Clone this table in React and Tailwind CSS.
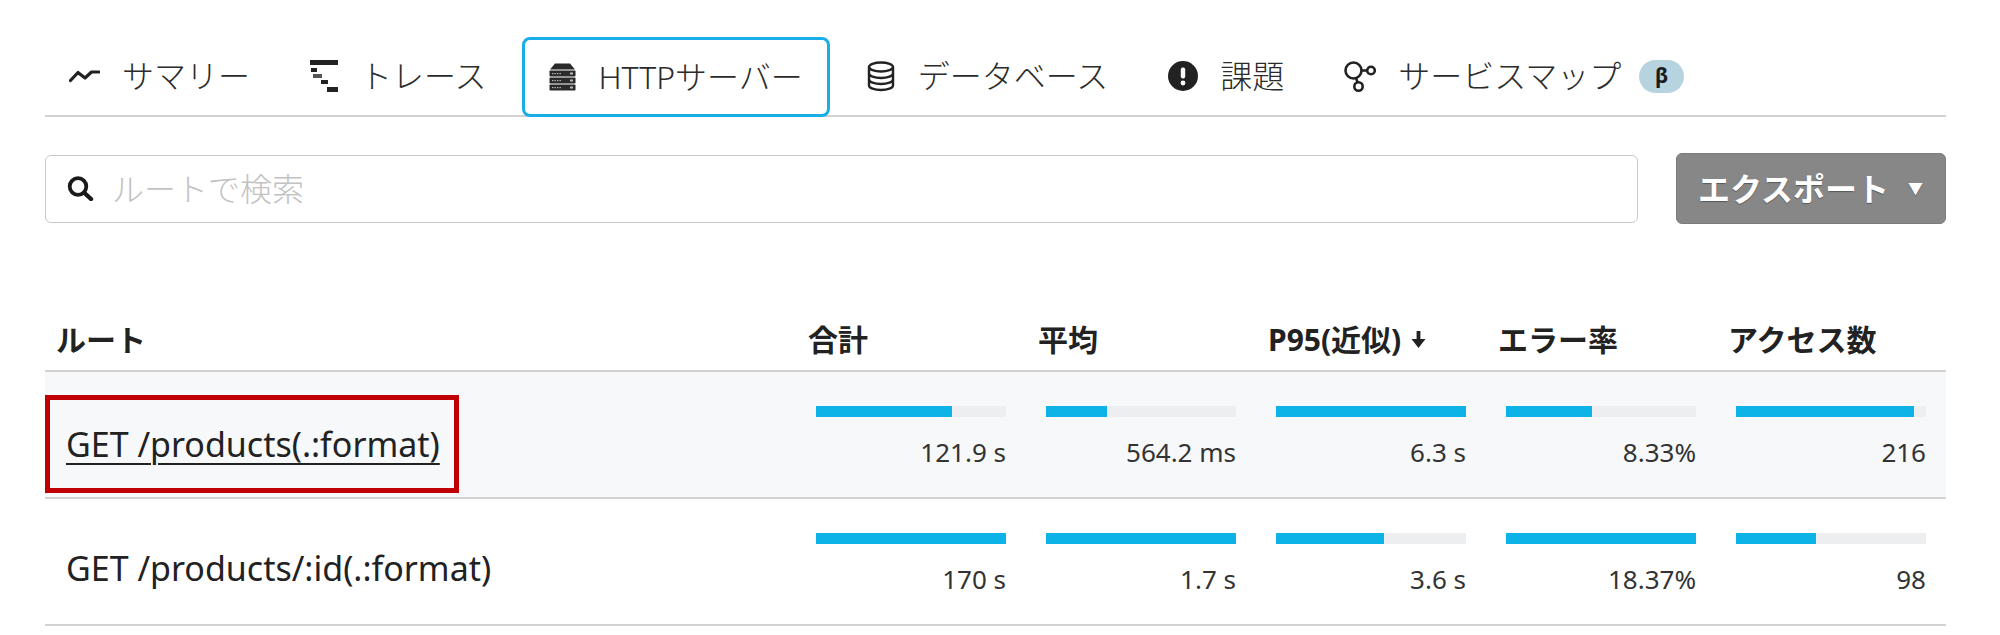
import React from 'react';

const TrendIcon = () => (
  <svg width="31" height="14" viewBox="0 0 31 14" fill="none">
    <path d="M1.5 11.5 L9 3.5 L16 9 L22.5 3 L30 3" stroke="#222" strokeWidth="3.2" strokeLinejoin="round" strokeLinecap="round" />
  </svg>
);

const TraceIcon = () => (
  <svg width="28" height="34" viewBox="0 0 28 34" fill="#222">
    <rect x="0" y="1" width="28" height="5" />
    <rect x="1" y="9" width="6" height="4" />
    <rect x="3" y="15" width="9" height="4" fill="#555" />
    <rect x="11" y="21" width="7" height="4" />
    <rect x="17" y="28" width="11" height="5" />
  </svg>
);

const ServerIcon = () => (
  <svg width="27" height="28" viewBox="0 0 27 28">
    <path d="M6 0.5 H21 L26 6.5 H1 Z" fill="#2a2a2a" />
    {[7.5, 14.5, 21.5].map((y) => (
      <g key={y}>
        <rect x="0.5" y={y} width="26" height="6" rx="0.8" fill="#2a2a2a" />
        <rect x="3" y={y + 2.5} width="1.4" height="1.2" fill="#bbb" />
        <rect x="5.5" y={y + 2.5} width="1.4" height="1.2" fill="#bbb" />
        <rect x="8" y={y + 2.5} width="1.4" height="1.2" fill="#bbb" />
        <rect x="10.5" y={y + 2.5} width="1.4" height="1.2" fill="#bbb" />
        <rect x="21" y={y + 2} width="3" height="2" fill="#bbb" />
      </g>
    ))}
  </svg>
);

const DbIcon = () => (
  <svg width="30" height="31" viewBox="0 0 30 31" fill="none" stroke="#222" strokeWidth="2.4">
    <ellipse cx="15" cy="6" rx="12" ry="4.5" />
    <path d="M3 6 V24.5 A12 4.5 0 0 0 27 24.5 V6" />
    <path d="M3 12.5 A12 4.5 0 0 0 27 12.5" />
    <path d="M3 18.5 A12 4.5 0 0 0 27 18.5" />
  </svg>
);

const IssueIcon = () => (
  <svg width="30" height="30" viewBox="0 0 30 30">
    <circle cx="15" cy="15" r="15" fill="#222" />
    <rect x="12.8" y="6.5" width="4.4" height="11" rx="2" fill="#fff" />
    <circle cx="15" cy="22" r="2.4" fill="#fff" />
  </svg>
);

const MapIcon = () => (
  <svg width="32" height="31" viewBox="0 0 32 31" fill="none" stroke="#222" strokeWidth="2.6">
    <circle cx="9.5" cy="9.5" r="8" />
    <circle cx="27" cy="9.5" r="3.8" />
    <circle cx="14.5" cy="25.5" r="4.2" />
    <path d="M17.5 9.5 H23.2" />
    <path d="M12 17 L13.6 21.3" />
  </svg>
);

const SearchIcon = () => (
  <svg width="28" height="25" viewBox="0 0 28 25" fill="none" stroke="#1a1a1a">
    <circle cx="11" cy="10.5" r="8.3" strokeWidth="3.8" />
    <path d="M17.5 17 L24 23" strokeWidth="4.4" strokeLinecap="round" />
  </svg>
);

const SortDown = () => (
  <svg width="15" height="19" viewBox="0 0 15 19" fill="#222">
    <rect x="5.6" y="1" width="3.8" height="10" />
    <path d="M0.5 9 H14.5 L7.5 18 Z" />
  </svg>
);

const tabs = [
  { label: 'サマリー', icon: <TrendIcon /> },
  { label: 'トレース', icon: <TraceIcon /> },
  { label: 'HTTPサーバー', icon: <ServerIcon />, active: true },
  { label: 'データベース', icon: <DbIcon /> },
  { label: '課題', icon: <IssueIcon /> },
  { label: 'サービスマップ', icon: <MapIcon />, beta: true },
];

const rows = [
  {
    route: 'GET /products(.:format)',
    marked: true,
    cells: [
      { pct: 71.6, value: '121.9 s' },
      { pct: 32, value: '564.2 ms' },
      { pct: 100, value: '6.3 s' },
      { pct: 45, value: '8.33%' },
      { pct: 93.7, value: '216' },
    ],
  },
  {
    route: 'GET /products/:id(.:format)',
    cells: [
      { pct: 100, value: '170 s' },
      { pct: 100, value: '1.7 s' },
      { pct: 57, value: '3.6 s' },
      { pct: 100, value: '18.37%' },
      { pct: 42, value: '98' },
    ],
  },
];

const Bar = ({ pct, value }) => (
  <div className="flex flex-col pl-[20px] pr-[20px] pt-[34px]">
    <div className="h-[11px] w-full bg-[#eceef0]">
      <div className="h-full bg-[#0db3e6]" style={{ width: `${pct}%` }} />
    </div>
    <div className="mt-[20px] text-right text-[26px] leading-[30px] text-[#333]">{value}</div>
  </div>
);

export default function App() {
  return (
    <div className="h-[635px] w-[2000px] overflow-hidden bg-white font-['Noto_Sans','Noto_Sans_CJK_JP',sans-serif] text-[#333]">
      <div className="pl-[45px] pr-[54px] pt-[37px]">
        {/* tabs */}
        <div className="flex h-[80px] gap-[12px] border-b-2 border-[#d2d2d2]">
          {tabs.map((t) => (
            <div
              key={t.label}
              className={`flex items-center gap-[22px] text-[32px] font-light ${
                t.active
                  ? 'relative z-10 -mb-[2px] h-[80px] rounded-[8px] border-[3px] border-[#1aaee6] bg-white px-[24px]'
                  : 'px-[24px]'
              }`}
            >
              {t.icon}
              <span className="leading-none text-[#2b2b2b]">{t.label}</span>
              {t.beta && (
                <span className="-ml-[4px] flex h-[33px] w-[45px] items-center justify-center rounded-full bg-[#b6d3df] text-[21px] font-bold text-[#1a1a1a]">
                  β
                </span>
              )}
            </div>
          ))}
        </div>

        {/* search + export */}
        <div className="mt-[36px] flex h-[71px] items-center gap-[38px]">
          <div className="flex h-[68px] flex-1 items-center gap-[17px] rounded-[6px] border-[1.5px] border-[#c9c9c9] pl-[21px]">
            <SearchIcon />
            <span className="text-[32px] font-light text-[#c2c2c2]">ルートで検索</span>
          </div>
          <button className="flex h-[71px] w-[270px] items-center justify-between rounded-[6px] border border-[#7c7c7c] bg-[#878787] pl-[21px] pr-[22px] text-[32px] font-bold text-white [text-shadow:0_1px_1px_rgba(0,0,0,0.35)]">
            <span>エクスポート</span>
            <span className="text-[15px]">▼</span>
          </button>
        </div>

        {/* table header */}
        <div className="mt-[84px] grid h-[64px] grid-cols-[751px_repeat(5,230px)] items-center border-b-2 border-[#d2d2d2] text-[30px] font-bold text-[#222]">
          <div className="pl-[11px]">ルート</div>
          <div className="pl-[12px]">合計</div>
          <div className="pl-[12px]">平均</div>
          <div className="flex items-center gap-[10px] pl-[12px]">
            <span>P95(近似)</span>
            <SortDown />
          </div>
          <div className="pl-[12px]">エラー率</div>
          <div className="pl-[12px]">アクセス数</div>
        </div>

        {/* rows */}
        {rows.map((r) => (
          <div
            key={r.route}
            className={`grid h-[127px] grid-cols-[751px_repeat(5,230px)] border-b-2 border-[#d2d2d2] ${
              r.marked ? 'bg-[#f7f8fa]' : 'bg-white'
            }`}
          >
            {r.marked ? (
              <div className="flex items-start pt-[23px]">
                <div className="flex h-[98px] w-[414px] items-center border-[5px] border-[#c00000] pl-[16px]">
                  <span className="text-[34px] text-[#222] underline decoration-2 underline-offset-[6px]">{r.route}</span>
                </div>
              </div>
            ) : (
              <div className="flex items-center pl-[21px] pt-[14px]">
                <span className="text-[34px] text-[#222]">{r.route}</span>
              </div>
            )}
            {r.cells.map((c, i) => (
              <Bar key={i} pct={c.pct} value={c.value} />
            ))}
          </div>
        ))}
      </div>
    </div>
  );
}
